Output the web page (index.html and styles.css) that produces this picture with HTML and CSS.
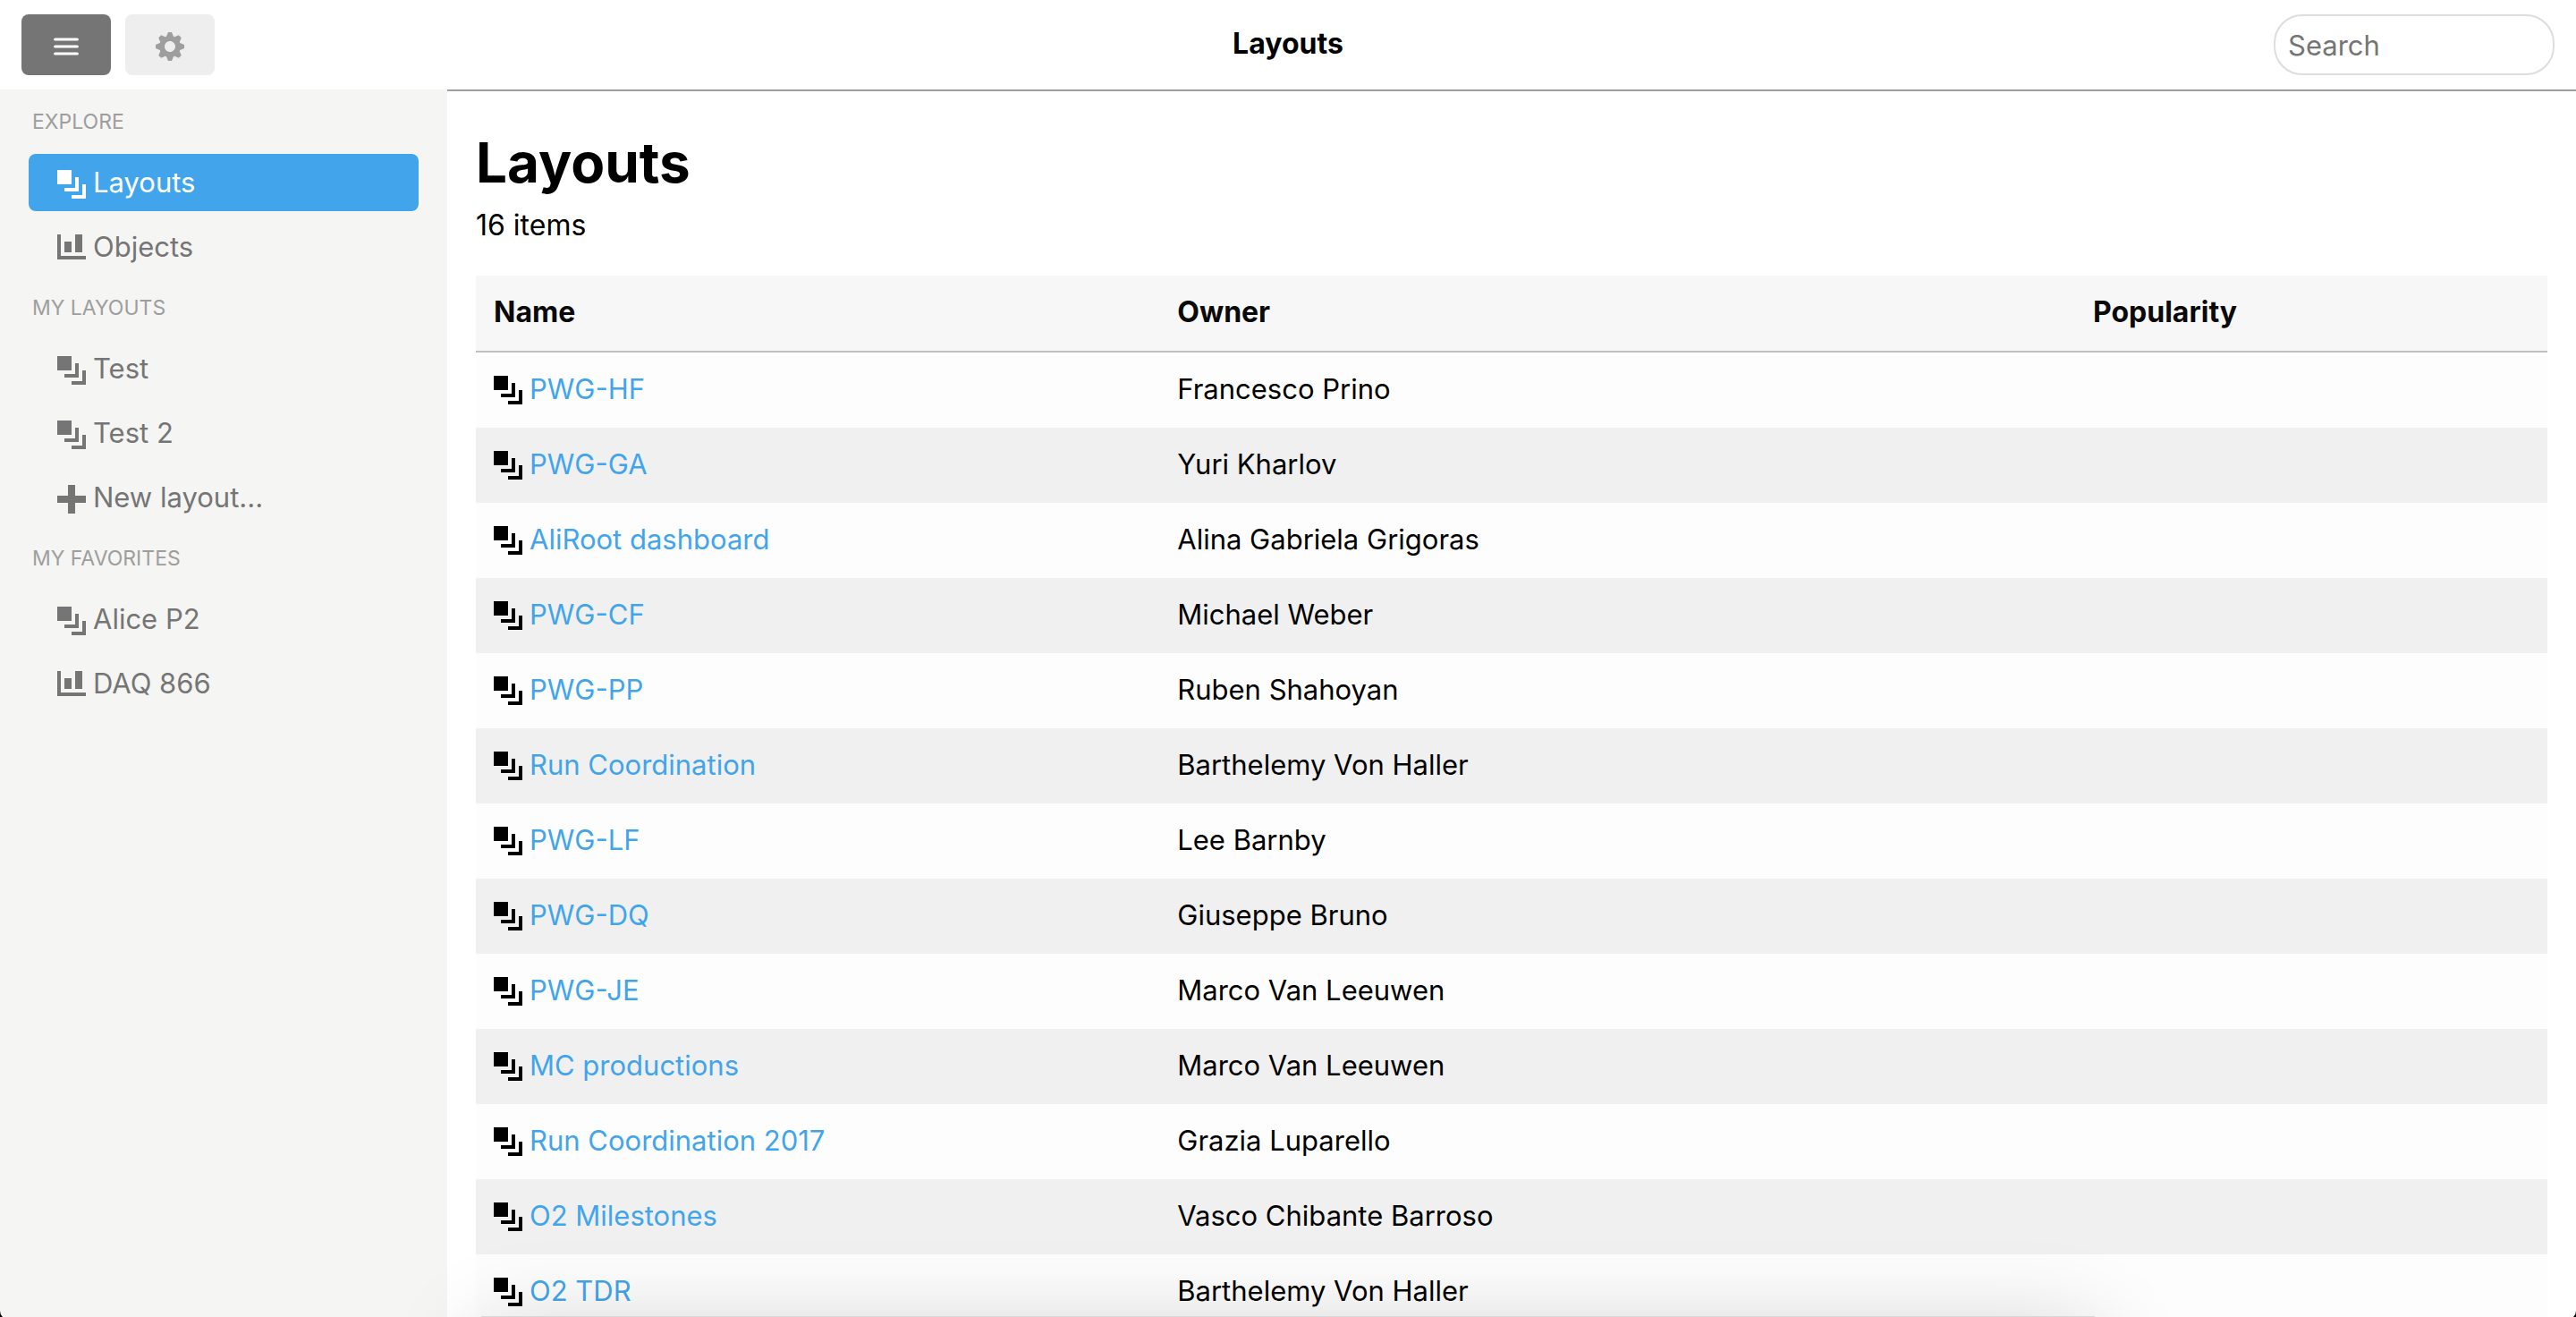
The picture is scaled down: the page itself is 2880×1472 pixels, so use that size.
FILE: index.html
```html
<!DOCTYPE html>
<html lang="en">
<head>
  <meta charset="utf-8">
  <title>Layouts</title>
  <link rel="stylesheet" href="styles.css">
</head>
<body>
  <svg class="sprite" aria-hidden="true">
    <symbol id="layers" viewBox="0 0 8 8"><path d="M0 0v4h4v-4h-4zm5 2v3h-3v1h4v-4h-1zm2 2v3h-3v1h4v-4h-1z"/></symbol>
    <symbol id="chart" viewBox="0 0 8 8"><path d="M0 0v7h8v-1h-7v-6h-1zm5 0v5h2v-5h-2zm-3 2v3h2v-3h-2z"/></symbol>
    <symbol id="plus" viewBox="0 0 8 8"><path d="M3 0v3h-3v2h3v3h2v-3h3v-2h-3v-3h-2z"/></symbol>
    <symbol id="menu" viewBox="0 0 32 32"><path d="M3.7 8h24.6M3.7 16h24.6M3.7 24h24.6" fill="none" stroke="currentColor" stroke-width="3.2" stroke-linecap="round"/></symbol>
    <symbol id="cog" viewBox="0 0 8 8"><path d="M3.5 0l-.5 1.19c-.1.03-.19.08-.28.13l-1.19-.5-.72.72.5 1.19c-.05.1-.09.18-.13.28l-1.19.5v1l1.19.5c.04.1.08.18.13.28l-.5 1.19.72.72 1.19-.5c.09.04.18.09.28.13l.5 1.19h1l.5-1.19c.09-.04.19-.08.28-.13l1.19.5.72-.72-.5-1.19c.04-.09.09-.19.13-.28l1.19-.5v-1l-1.19-.5c-.03-.09-.08-.19-.13-.28l.5-1.19-.72-.72-1.19.5c-.09-.04-.19-.09-.28-.13l-.5-1.19h-1zm.5 2.5c.83 0 1.5.67 1.5 1.5s-.67 1.5-1.5 1.5-1.5-.67-1.5-1.5.67-1.5 1.5-1.5z"/></symbol>
  </svg>

  <header class="topbar">
    <div class="toolbar">
      <button class="tool tool-active" type="button" aria-label="Toggle sidebar"><svg class="icon"><use href="#menu"/></svg></button>
      <button class="tool" type="button" aria-label="Settings"><svg class="icon"><use href="#cog"/></svg></button>
    </div>
    <div class="topbar-title">Layouts</div>
    <input class="search" type="text" placeholder="Search" aria-label="Search">
  </header>

  <div class="body">
    <nav class="sidebar">
      <h2 class="group">Explore</h2>
      <div class="menu">
        <a class="entry entry-active" href="#layouts"><svg class="icon"><use href="#layers"/></svg>Layouts</a>
        <a class="entry" href="#objects"><svg class="icon"><use href="#chart"/></svg>Objects</a>
      </div>
      <h2 class="group">My layouts</h2>
      <div class="menu">
        <a class="entry" href="#test"><svg class="icon"><use href="#layers"/></svg>Test</a>
        <a class="entry" href="#test-2"><svg class="icon"><use href="#layers"/></svg>Test 2</a>
        <a class="entry" href="#new"><svg class="icon"><use href="#plus"/></svg>New layout...</a>
      </div>
      <h2 class="group">My favorites</h2>
      <div class="menu">
        <a class="entry" href="#alice-p2"><svg class="icon"><use href="#layers"/></svg>Alice P2</a>
        <a class="entry" href="#daq-866"><svg class="icon"><use href="#chart"/></svg>DAQ 866</a>
      </div>
    </nav>

    <main class="content">
      <h1 class="heading">Layouts</h1>
      <p class="count">16 items</p>
      <table class="table">
        <colgroup><col class="col-name"><col><col class="col-popularity"></colgroup>
        <thead>
          <tr><th scope="col">Name</th><th scope="col">Owner</th><th scope="col">Popularity</th></tr>
        </thead>
        <tbody>
          <tr><td><div class="name"><svg class="icon"><use href="#layers"/></svg><a href="#l1">PWG-HF</a></div></td><td>Francesco Prino</td><td></td></tr>
          <tr><td><div class="name"><svg class="icon"><use href="#layers"/></svg><a href="#l2">PWG-GA</a></div></td><td>Yuri Kharlov</td><td></td></tr>
          <tr><td><div class="name"><svg class="icon"><use href="#layers"/></svg><a href="#l3">AliRoot dashboard</a></div></td><td>Alina Gabriela Grigoras</td><td></td></tr>
          <tr><td><div class="name"><svg class="icon"><use href="#layers"/></svg><a href="#l4">PWG-CF</a></div></td><td>Michael Weber</td><td></td></tr>
          <tr><td><div class="name"><svg class="icon"><use href="#layers"/></svg><a href="#l5">PWG-PP</a></div></td><td>Ruben Shahoyan</td><td></td></tr>
          <tr><td><div class="name"><svg class="icon"><use href="#layers"/></svg><a href="#l6">Run Coordination</a></div></td><td>Barthelemy Von Haller</td><td></td></tr>
          <tr><td><div class="name"><svg class="icon"><use href="#layers"/></svg><a href="#l7">PWG-LF</a></div></td><td>Lee Barnby</td><td></td></tr>
          <tr><td><div class="name"><svg class="icon"><use href="#layers"/></svg><a href="#l8">PWG-DQ</a></div></td><td>Giuseppe Bruno</td><td></td></tr>
          <tr><td><div class="name"><svg class="icon"><use href="#layers"/></svg><a href="#l9">PWG-JE</a></div></td><td>Marco Van Leeuwen</td><td></td></tr>
          <tr><td><div class="name"><svg class="icon"><use href="#layers"/></svg><a href="#l10">MC productions</a></div></td><td>Marco Van Leeuwen</td><td></td></tr>
          <tr><td><div class="name"><svg class="icon"><use href="#layers"/></svg><a href="#l11">Run Coordination 2017</a></div></td><td>Grazia Luparello</td><td></td></tr>
          <tr><td><div class="name"><svg class="icon"><use href="#layers"/></svg><a href="#l12">O2 Milestones</a></div></td><td>Vasco Chibante Barroso</td><td></td></tr>
          <tr><td><div class="name"><svg class="icon"><use href="#layers"/></svg><a href="#l13">O2 TDR</a></div></td><td>Barthelemy Von Haller</td><td></td></tr>
        </tbody>
      </table>
    </main>
  </div>

  <div class="dock-shadow"></div>
  <div class="window-corners"></div>
</body>
</html>
```

FILE: styles.css
```css
* {
  box-sizing: border-box;
}

body {
  margin: 0;
  height: 100vh;
  display: flex;
  flex-direction: column;
  overflow: hidden;
  background: #fff;
  color: #000;
  font-family: Inter, "Liberation Sans", sans-serif;
  font-size: 31px;
  line-height: 40px;
}

.sprite {
  display: none;
}

.icon {
  flex: none;
  width: 32px;
  height: 32px;
  margin-top: 4px;
  fill: currentColor;
}

/* Top bar */
.topbar {
  flex: none;
  display: grid;
  grid-template-columns: 1fr auto 1fr;
  align-items: center;
  height: 100px;
  padding: 0 24px;
}

.toolbar {
  display: flex;
  gap: 16px;
}

.tool {
  display: flex;
  align-items: center;
  justify-content: center;
  width: 100px;
  height: 68px;
  padding: 0;
  border: 0;
  border-radius: 8px;
  background: #eee;
  color: #9e9e9e;
}

.tool-active {
  background: #757575;
  color: #fff;
}

.topbar-title {
  padding-bottom: 2px;
  font-size: 32px;
  font-weight: 700;
}

.search {
  justify-self: end;
  width: 314px;
  height: 68px;
  padding: 0 14px;
  border: 2px solid #ddd;
  border-radius: 32px;
  background: #fff;
  color: #000;
  font: inherit;
}

.search::placeholder {
  color: #757575;
  opacity: 1;
}

/* Sidebar */
.body {
  flex: 1;
  display: flex;
  min-height: 0;
}

.sidebar {
  flex: none;
  width: 500px;
  padding: 0 32px;
  background: #f5f5f3;
}

.group {
  margin: 0;
  padding-left: 4px;
  color: #9e9e9e;
  font-size: 23px;
  font-weight: 400;
  line-height: 72px;
  text-transform: uppercase;
}

.menu {
  display: flex;
  flex-direction: column;
  gap: 8px;
}

.entry {
  display: flex;
  align-items: center;
  gap: 8px;
  height: 64px;
  padding: 0 32px;
  border-radius: 8px;
  color: #757575;
  text-decoration: none;
}

.entry-active {
  background: #42a5ec;
  color: #fff;
}

/* Main content */
.content {
  flex: 1;
  min-width: 0;
  padding: 40px 32px 0;
  border-top: 2px solid #9e9e9e;
  overflow: hidden;
}

.heading {
  margin: 0;
  font-size: 62px;
  font-weight: 700;
  line-height: 80px;
}

.count {
  margin: 10px 0 36px;
  font-size: 32px;
}

.table {
  width: 100%;
  border-collapse: separate;
  border-spacing: 0;
  table-layout: fixed;
}

.col-name {
  width: 33%;
}

.col-popularity {
  width: 528px;
}

.table th,
.table td {
  height: 84px;
  padding: 0 20px 2px;
  text-align: left;
  vertical-align: middle;
}

.table th {
  height: 86px;
  border-bottom: 2px solid #c0c0c0;
  background: #f7f7f7;
  color: #0a0a0a;
  font-size: 32px;
  font-weight: 700;
}

.table td {
  background: #fdfdfd;
}

.table tr:nth-child(even) td {
  background: #f0f0f0;
}

.name {
  display: flex;
  align-items: center;
  gap: 8px;
}

.name .icon {
  margin-top: 2px;
}

.name a {
  color: #42a5ec;
  text-decoration: none;
}

/* Shadow of the panel that sits just under the window */
.dock-shadow {
  position: fixed;
  top: calc(100vh - 1px);
  left: 538px;
  right: 538px;
  height: 400px;
  background: #d8d8d8;
  box-shadow: 0 20px 100px rgba(0, 0, 0, 0.2);
  pointer-events: none;
}

/* Rounded bottom corners of the window */
.window-corners {
  position: fixed;
  inset: -20px 0 -3px;
  border-radius: 10px;
  box-shadow: 0 0 0 20px #000;
  pointer-events: none;
}
```
